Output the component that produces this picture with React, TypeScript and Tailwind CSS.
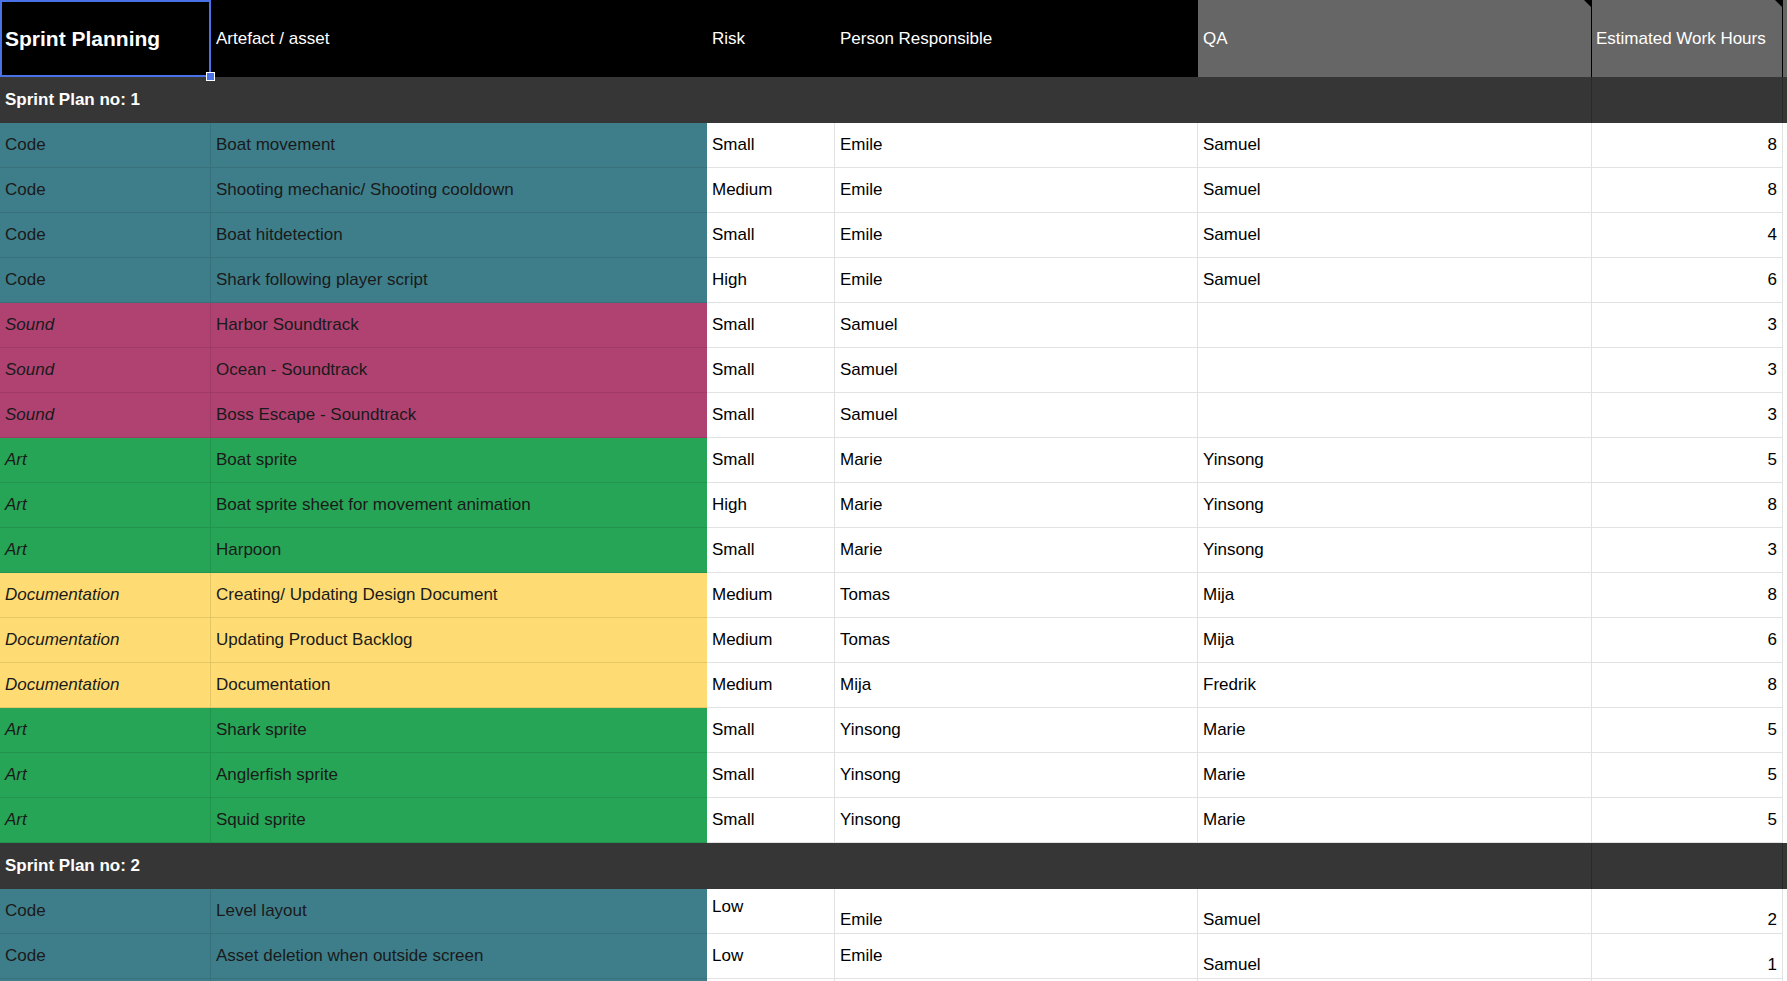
import React from "react";

const C = { Code: "bg-[#3d7e8a]", Sound: "bg-[#b04272]", Art: "bg-[#26a556]", Documentation: "bg-[#fedc73]" } as const;
type K = keyof typeof C;
type R = [K, string, string, string, string, number | string];
const s1: R[] = [
  ["Code", "Boat movement", "Small", "Emile", "Samuel", 8],
  ["Code", "Shooting mechanic/ Shooting cooldown", "Medium", "Emile", "Samuel", 8],
  ["Code", "Boat hitdetection", "Small", "Emile", "Samuel", 4],
  ["Code", "Shark following player script", "High", "Emile", "Samuel", 6],
  ["Sound", "Harbor Soundtrack", "Small", "Samuel", "", 3],
  ["Sound", "Ocean - Soundtrack", "Small", "Samuel", "", 3],
  ["Sound", "Boss Escape - Soundtrack", "Small", "Samuel", "", 3],
  ["Art", "Boat sprite", "Small", "Marie", "Yinsong", 5],
  ["Art", "Boat sprite sheet for movement animation", "High", "Marie", "Yinsong", 8],
  ["Art", "Harpoon", "Small", "Marie", "Yinsong", 3],
  ["Documentation", "Creating/ Updating Design Document", "Medium", "Tomas", "Mija", 8],
  ["Documentation", "Updating Product Backlog", "Medium", "Tomas", "Mija", 6],
  ["Documentation", "Documentation", "Medium", "Mija", "Fredrik", 8],
  ["Art", "Shark sprite", "Small", "Yinsong", "Marie", 5],
  ["Art", "Anglerfish sprite", "Small", "Yinsong", "Marie", 5],
  ["Art", "Squid sprite", "Small", "Yinsong", "Marie", 5],
];

const cols = "grid grid-cols-[211px_496px_128px_363px_394px_191px_4px]";
const colorLine: Record<K, string> = { Code: "border-[#36717c]", Sound: "border-[#9e3b66]", Art: "border-[#22944d]", Documentation: "border-[#e5c667]" };

function Row({ r, align = ["center", "center", "center", "center", "center", "center"] }: { r: R; align?: string[] }) {
  const [k, a, risk, p, qa, h] = r;
  const al = (i: number) => (align[i] === "start" ? "items-start pt-[5px]" : align[i] === "end" ? "items-end pb-[1px]" : "items-center");
  const it = k !== "Code" ? "italic" : "";
  const w = "border-b border-r border-[#e2e2e2] bg-white text-black";
  return (
    <div className={`${cols} h-[45px] text-[17px]`}>
      <div className={`${C[k]} ${colorLine[k]} border-b border-r flex px-[5px] text-[#1a1a1a] ${it} ${al(0)}`}>{k}</div>
      <div className={`${C[k]} ${colorLine[k]} border-b flex px-[5px] text-[#1a1a1a] ${al(1)}`}>{a}</div>
      <div className={`${w} flex px-[5px] ${al(2)}`}>{risk}</div>
      <div className={`${w} flex px-[5px] ${al(3)}`}>{p}</div>
      <div className={`${w} flex px-[5px] ${al(4)}`}>{qa}</div>
      <div className={`${w} flex justify-end px-[5px] ${al(5)}`}>{h}</div>
      <div className="bg-white" />
    </div>
  );
}

function Section({ t }: { t: string }) {
  return (
    <div className={`${cols} h-[46px] bg-[#363636] text-white font-bold text-[17px]`}>
      <div className="flex items-center px-[5px] whitespace-nowrap">{t}</div>
      <div /><div /><div /><div className="border-r border-[#2a2a2a]" /><div className="border-r border-[#2a2a2a]" /><div />
    </div>
  );
}

export default function App() {
  return (
    <div className="w-[1787px] h-[981px] overflow-hidden bg-white" style={{ fontFamily: "'Liberation Sans', Arial, sans-serif" }}>
      <div className={`${cols} h-[77px] text-white text-[17px]`}>
        <div className="relative bg-black border-2 border-[#4a72e8] flex items-center px-[3px] font-bold text-[21px]">
          Sprint Planning
          <div className="absolute right-[-6px] bottom-[-6px] w-[9px] h-[9px] bg-[#4a72e8] border border-white z-10" />
        </div>
        <div className="bg-black flex items-center px-[5px]">Artefact / asset</div>
        <div className="bg-black flex items-center px-[5px]">Risk</div>
        <div className="bg-black flex items-center px-[5px]">Person Responsible</div>
        <div className="relative bg-[#666666] border-r border-black flex items-center px-[5px]">
          QA
          <div className="absolute right-0 top-0 w-0 h-0 border-l-[7px] border-l-transparent border-t-[7px] border-t-black" />
        </div>
        <div className="relative bg-[#666666] border-r border-black flex items-center px-[4px] whitespace-nowrap">
          Estimated Work Hours
          <div className="absolute right-0 top-0 w-0 h-0 border-l-[7px] border-l-transparent border-t-[7px] border-t-black" />
        </div>
        <div className="bg-[#666666]" />
      </div>
      <Section t="Sprint Plan no: 1" />
      {s1.map((r, i) => <Row key={i} r={r} />)}
      <Section t="Sprint Plan no: 2" />
      <Row r={["Code", "Level layout", "Low", "Emile", "Samuel", 2]} align={["center", "center", "start", "end", "end", "end"]} />
      <Row r={["Code", "Asset deletion when outside screen", "Low", "Emile", "Samuel", 1]} align={["center", "center", "center", "center", "end", "end"]} />
      <Row r={["Code", "", "", "", "", ""]} />
    </div>
  );
}
